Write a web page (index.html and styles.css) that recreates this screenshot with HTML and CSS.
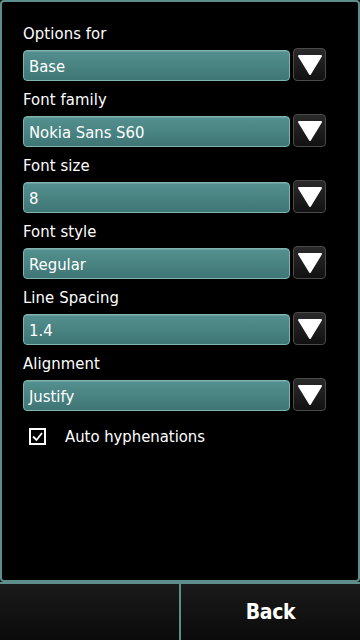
FILE: index.html
```html
<!DOCTYPE html>
<html>
<head>
<meta charset="utf-8">
<link rel="stylesheet" href="styles.css">
</head>
<body>
<div class="screen">
  <div class="panel">
    <div class="group">
      <div class="label">Options for</div>
      <div class="row"><div class="field">Base</div><div class="drop"><svg width="26" height="22" viewBox="0 0 26 22"><path d="M2 2 H24 L13 20 Z" fill="#fff" stroke="#fff" stroke-width="2" stroke-linejoin="round"/></svg></div></div>
    </div>
    <div class="group">
      <div class="label">Font family</div>
      <div class="row"><div class="field">Nokia Sans S60</div><div class="drop"><svg width="26" height="22" viewBox="0 0 26 22"><path d="M2 2 H24 L13 20 Z" fill="#fff" stroke="#fff" stroke-width="2" stroke-linejoin="round"/></svg></div></div>
    </div>
    <div class="group">
      <div class="label">Font size</div>
      <div class="row"><div class="field">8</div><div class="drop"><svg width="26" height="22" viewBox="0 0 26 22"><path d="M2 2 H24 L13 20 Z" fill="#fff" stroke="#fff" stroke-width="2" stroke-linejoin="round"/></svg></div></div>
    </div>
    <div class="group">
      <div class="label">Font style</div>
      <div class="row"><div class="field">Regular</div><div class="drop"><svg width="26" height="22" viewBox="0 0 26 22"><path d="M2 2 H24 L13 20 Z" fill="#fff" stroke="#fff" stroke-width="2" stroke-linejoin="round"/></svg></div></div>
    </div>
    <div class="group">
      <div class="label">Line Spacing</div>
      <div class="row"><div class="field">1.4</div><div class="drop"><svg width="26" height="22" viewBox="0 0 26 22"><path d="M2 2 H24 L13 20 Z" fill="#fff" stroke="#fff" stroke-width="2" stroke-linejoin="round"/></svg></div></div>
    </div>
    <div class="group">
      <div class="label">Alignment</div>
      <div class="row"><div class="field">Justify</div><div class="drop"><svg width="26" height="22" viewBox="0 0 26 22"><path d="M2 2 H24 L13 20 Z" fill="#fff" stroke="#fff" stroke-width="2" stroke-linejoin="round"/></svg></div></div>
    </div>
    <div class="check">
      <svg class="box" width="17" height="17" viewBox="0 0 17 17"><rect x="1" y="1" width="15" height="15" fill="none" stroke="#fff" stroke-width="2"/><path d="M4 8.5 L7.5 12 L13 5" fill="none" stroke="#fff" stroke-width="1.8"/></svg>
      <span>Auto hyphenations</span>
    </div>
  </div>
  <div class="softkeys">
    <div class="key"></div>
    <div class="key">Back</div>
  </div>
</div>
</body>
</html>
```
FILE: styles.css
```css
* { box-sizing: border-box; }
html, body { margin: 0; padding: 0; background: #000; }
body { font-family: "DejaVu Sans Condensed", "DejaVu Sans", sans-serif; color: #fff; }
.screen { width: 360px; height: 640px; display: flex; flex-direction: column; background: #000; }
.panel {
  height: 582px;
  border: 2px solid #5d8e8c;
  border-radius: 4px;
  padding: 20px 0 0 21px;
  display: flex;
  flex-direction: column;
}
.group { display: flex; flex-direction: column; height: 66px; }
.label { font-size: 16.5px; height: 28px; line-height: 24px; letter-spacing: 0.1px; }
.row { display: flex; align-items: center; gap: 3px; }
.field {
  width: 267px;
  height: 31px;
  border: 1px solid #7fb3b0;
  border-radius: 4px;
  background: linear-gradient(#54908f, #3e7675);
  font-size: 16.5px;
  line-height: 29px;
  padding: 1px 0 0 5px;
  box-shadow: inset 0 1px 0 rgba(255,255,255,0.15);
}
.drop {
  width: 33px;
  height: 33px;
  border: 1px solid #4a4a4a;
  border-radius: 4px;
  background: linear-gradient(#2a2a2a, #111);
  display: flex;
  align-items: center;
  justify-content: center;
  margin-top: -2px;
}
.check { display: flex; align-items: center; margin-top: 6px; height: 24px; }
.check .box { margin-left: 6px; }
.check span { margin-left: 19px; font-size: 16.5px; }
.softkeys {
  flex: 1;
  display: flex;
  border-top: 2px solid #5d8e8c;
  background: linear-gradient(#1a1a1a, #0b0b0b);
}
.key {
  flex: 1;
  display: flex;
  align-items: center;
  justify-content: center;
  font-size: 21px;
  font-weight: bold;
  letter-spacing: -0.3px;
}
.key + .key { border-left: 2px solid #5d8e8c; }
```
